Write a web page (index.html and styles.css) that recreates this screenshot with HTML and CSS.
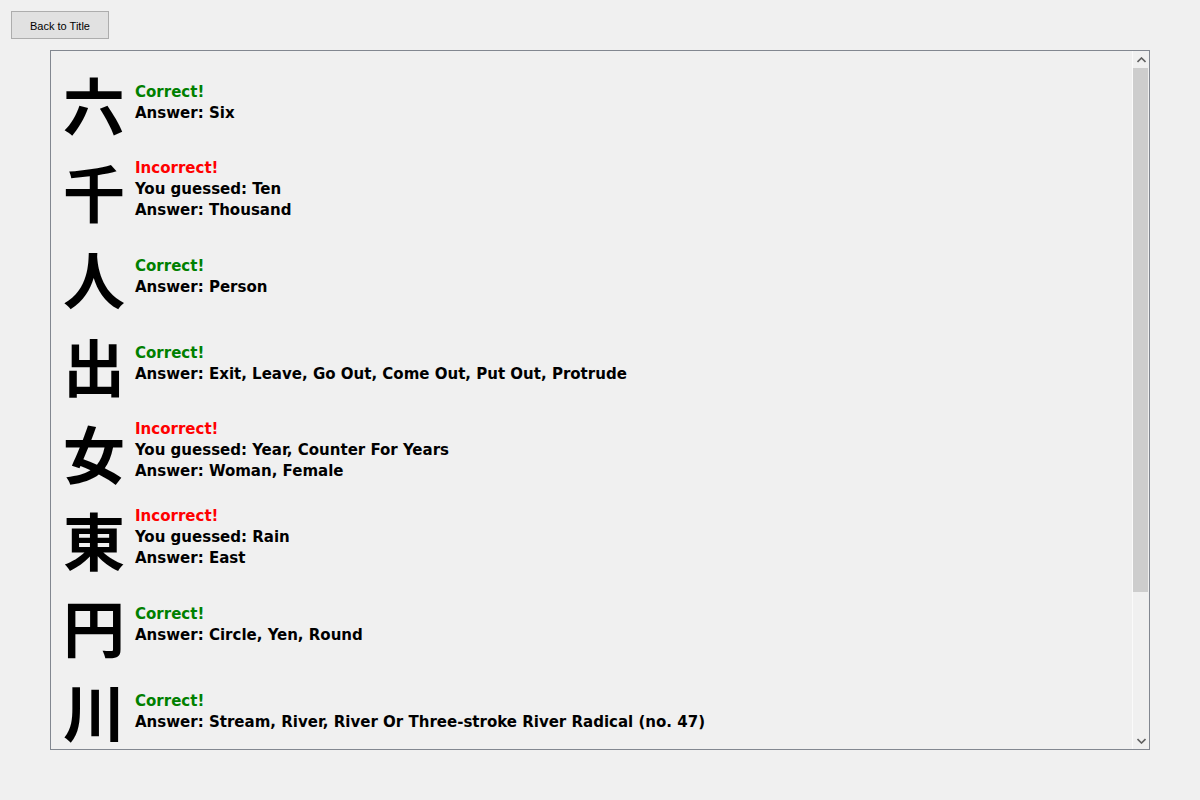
FILE: index.html
```html
<!DOCTYPE html>
<html>
<head>
<meta charset="utf-8">
<link rel="stylesheet" href="styles.css">
</head>
<body>
<div class="page">
  <button class="back-btn">Back to Title</button>
  <div class="results-box">
    <div class="results-list">
      <div class="row"><div class="kanji">六</div><div class="info"><div class="status ok">Correct!</div><div class="line">Answer: Six</div></div></div>
      <div class="row"><div class="kanji">千</div><div class="info"><div class="status bad">Incorrect!</div><div class="line">You guessed: Ten</div><div class="line">Answer: Thousand</div></div></div>
      <div class="row"><div class="kanji">人</div><div class="info"><div class="status ok">Correct!</div><div class="line">Answer: Person</div></div></div>
      <div class="row"><div class="kanji">出</div><div class="info"><div class="status ok">Correct!</div><div class="line">Answer: Exit, Leave, Go Out, Come Out, Put Out, Protrude</div></div></div>
      <div class="row"><div class="kanji">女</div><div class="info"><div class="status bad">Incorrect!</div><div class="line">You guessed: Year, Counter For Years</div><div class="line">Answer: Woman, Female</div></div></div>
      <div class="row"><div class="kanji">東</div><div class="info"><div class="status bad">Incorrect!</div><div class="line">You guessed: Rain</div><div class="line">Answer: East</div></div></div>
      <div class="row"><div class="kanji">円</div><div class="info"><div class="status ok">Correct!</div><div class="line">Answer: Circle, Yen, Round</div></div></div>
      <div class="row last"><div class="kanji">川</div><div class="info"><div class="status ok">Correct!</div><div class="line">Answer: Stream, River, River Or Three-stroke River Radical (no. 47)</div></div></div>
    </div>
    <div class="scrollbar">
      <div class="arrow">
        <svg width="9" height="6" viewBox="0 0 9 6"><path d="M0.5 5 L4.5 1 L8.5 5" fill="none" stroke="#606060" stroke-width="1.6"/></svg>
      </div>
      <div class="track"><div class="thumb"></div></div>
      <div class="arrow">
        <svg width="9" height="6" viewBox="0 0 9 6"><path d="M0.5 1 L4.5 5 L8.5 1" fill="none" stroke="#606060" stroke-width="1.6"/></svg>
      </div>
    </div>
  </div>
</div>
</body>
</html>
```
FILE: styles.css
```css
html, body {
  margin: 0;
  padding: 0;
  background: #f0f0f0;
}
.page {
  width: 1200px;
  height: 800px;
  padding: 11px 0 0 0;
  box-sizing: border-box;
  display: flex;
  flex-direction: column;
  align-items: flex-start;
}
.back-btn {
  margin-left: 11px;
  width: 98px;
  height: 28px;
  background: #e1e1e1;
  border: 1px solid #adadad;
  font-family: "Liberation Sans", Arial, sans-serif;
  font-size: 11px;
  color: #000;
  padding: 2px 0 0 0;
}
.results-box {
  margin-top: 11px;
  margin-left: 50px;
  width: 1100px;
  height: 700px;
  box-sizing: border-box;
  border: 1px solid #828790;
  display: flex;
  overflow: hidden;
}
.results-list {
  flex: 1;
  overflow: hidden;
  padding: 9px 0 0 12px;
  border-right: 1px solid #fafafa;
}
.row {
  height: 87px;
  display: flex;
  align-items: center;
}
.row.last {
  height: 78px;
  align-items: flex-start;
}
.row.last .kanji {
  line-height: 66px;
  margin-top: 8px;
}
.row.last .info {
  margin-top: 21px;
}
.kanji {
  font-family: "Noto Sans CJK JP", sans-serif;
  font-weight: 700;
  font-size: 62px;
  line-height: 80px;
  width: 72px;
  color: #000;
}
.info {
  font-family: "DejaVu Sans Condensed", "DejaVu Sans", sans-serif;
  font-weight: bold;
  font-size: 16.7px;
  line-height: 21px;
  color: #000;
  margin-top: -4px;
}
.status.ok { color: #008000; }
.status.bad { color: #ff0000; }
.scrollbar {
  width: 16px;
  display: flex;
  flex-direction: column;
  background: #f0f0f0;
}
.arrow {
  height: 17px;
  display: flex;
  align-items: center;
  justify-content: center;
}
.track {
  flex: 1;
}
.thumb {
  width: 15px;
  height: 524px;
  background: #cdcdcd;
}
```
